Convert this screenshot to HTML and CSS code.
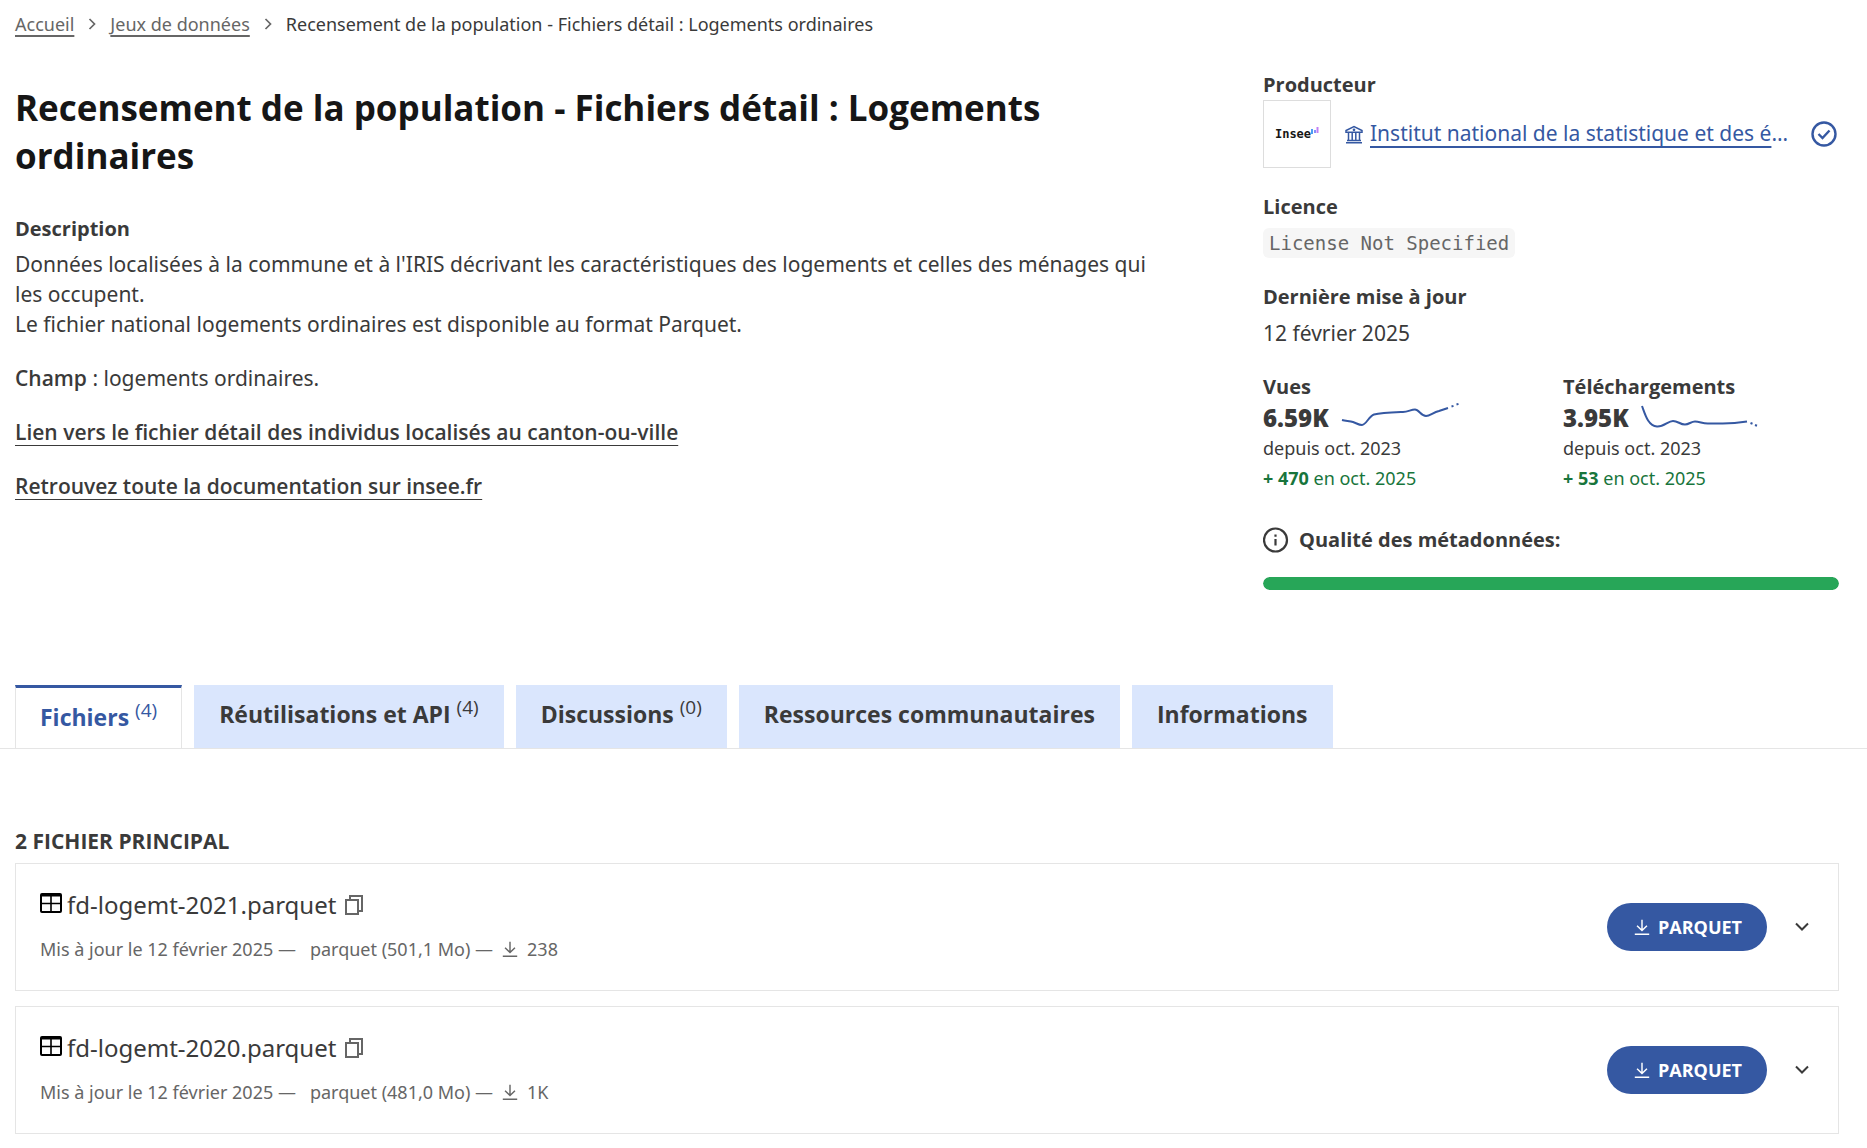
FILE: index.html
```html
<!DOCTYPE html>
<html lang="fr">
<head>
<meta charset="utf-8">
<meta name="viewport" content="width=device-width, initial-scale=1">
<title>Recensement de la population - Fichiers détail : Logements ordinaires</title>
<link rel="stylesheet" href="styles.css">
</head>
<body>
<svg class="sprite" aria-hidden="true">
  <symbol id="i-right" viewBox="0 0 20 20"><path d="M7.500 5l5 5-5 5" fill="none" stroke="currentColor" stroke-width="1.700"/></symbol>
  <symbol id="i-down" viewBox="0 0 20 20"><path d="M4 6.500l6 6 6-6" fill="none" stroke="currentColor" stroke-width="2"/></symbol>
  <symbol id="i-download" viewBox="0 0 20 20"><path d="M10 2v12M4.500 8.500L10 14l5.500-5.500M2 18h16" fill="none" stroke="currentColor" stroke-width="1.600"/></symbol>
  <symbol id="i-copy" viewBox="0 0 20 22"><path d="M6 6V2h12v15h-4M2 6h12v14H2z" fill="none" stroke="currentColor" stroke-width="2"/></symbol>
  <symbol id="i-table" viewBox="0 0 22 20"><rect x="1" y="1" width="20" height="18" rx="1" fill="none" stroke="currentColor" stroke-width="2"/><path d="M1 2.500h20" stroke="currentColor" stroke-width="2"/><path d="M11 2v17M1 10.500h20" fill="none" stroke="currentColor" stroke-width="1.600"/></symbol>
</svg>

<nav class="breadcrumb" aria-label="Fil d'Ariane">
  <ol>
    <li><a href="#accueil">Accueil</a></li>
    <li><svg class="sep"><use href="#i-right"/></svg><a href="#jeux">Jeux de données</a></li>
    <li><svg class="sep"><use href="#i-right"/></svg><span class="current">Recensement de la population - Fichiers détail : Logements ordinaires</span></li>
  </ol>
</nav>

<main>
  <div class="overview">
    <section class="intro">
      <h1>Recensement de la population - Fichiers détail : Logements ordinaires</h1>
      <h2 class="label">Description</h2>
      <div class="prose">
        <p>Données localisées à la commune et à l'IRIS décrivant les caractéristiques des logements et celles des ménages qui les occupent.<br>Le fichier national logements ordinaires est disponible au format Parquet.</p>
        <p><strong>Champ</strong> : logements ordinaires.</p>
        <p><a href="#individus">Lien vers le fichier détail des individus localisés au canton-ou-ville</a></p>
        <p><a href="#documentation">Retrouvez toute la documentation sur insee.fr</a></p>
      </div>
    </section>

    <aside class="facts">
      <section>
        <h2 class="label">Producteur</h2>
        <div class="producer">
          <div class="logo"><span>Insee</span><svg viewBox="0 0 8 8" width="8" height="8"><path d="M1 2v5" stroke="#4a9cf5" stroke-width="2"/><path d="M4 3v3" stroke="#5a6df5" stroke-width="1.500"/><path d="M6.500 0v6" stroke="#c080f5" stroke-width="2"/></svg></div>
          <svg class="bank" viewBox="0 0 18 18" fill="none" stroke="currentColor" stroke-width="1.500"><path d="M1 17.200h16M2 15h14M3.500 7v8M7.200 7v8M10.800 7v8M14.500 7v8M1 6.800V5l8-4 8 4v1.800z"/><circle cx="9" cy="4.300" r=".6"/></svg>
          <div class="name"><a href="#insee">Institut national de la statistique et des études économiques</a></div>
          <svg class="round" viewBox="0 0 26 26" fill="none" stroke="currentColor" stroke-width="2.400"><circle cx="13" cy="13" r="11.500"/><path d="M7.500 13l4 4 7-7.500"/></svg>
        </div>
      </section>
      <section>
        <h2 class="label">Licence</h2>
        <p class="value"><code>License Not Specified</code></p>
      </section>
      <section>
        <h2 class="label">Dernière mise à jour</h2>
        <p class="value">12 février 2025</p>
      </section>
      <div class="stats">
        <section>
          <h2 class="label">Vues</h2>
          <div class="figure"><strong>6.59K</strong>
            <svg class="spark" viewBox="0 -1 118 28"><path d="M1 17C5 18 9 18 12 19C15 20 18 22 21 22C25 22 28 13 33 11.500C40 10 52 9.500 62 9C67 9 70 6.500 74 6.500C78 6.500 80 13 85 13C89 13 92 9.500 98 8L107 5"/><path d="M110.500 3.500l2-.6M115.500 1.500l2-.6"/></svg>
          </div>
          <p>depuis oct. 2023</p>
          <p class="gain"><strong>+ 470</strong> en oct. 2025</p>
        </section>
        <section>
          <h2 class="label">Téléchargements</h2>
          <div class="figure"><strong>3.95K</strong>
            <svg class="spark" viewBox="0 -1 118 28"><path d="M1 3C4 11 7 23 16 23.500C23 24 27 18 32 18C37 18 39 21.500 44 21.500C48 21.500 50 18.500 54 18.500C59 18.500 62 21 68 20.500C80 20 85 22 106 18.500"/><path d="M109.500 20l2 .8M114 22l2 .8"/></svg>
          </div>
          <p>depuis oct. 2023</p>
          <p class="gain"><strong>+ 53</strong> en oct. 2025</p>
        </section>
      </div>
      <section class="quality">
        <h2 class="label"><svg class="round" viewBox="0 0 26 26" fill="none" stroke="currentColor" stroke-width="2.200"><circle cx="12.500" cy="13" r="11.500"/><path d="M12.500 12v6.500M12.500 7.500v2.200"/></svg>Qualité des métadonnées:</h2>
        <div class="meter" role="meter" aria-label="Qualité des métadonnées" aria-valuemin="0" aria-valuemax="100" aria-valuenow="100"><div style="width: 100%"></div></div>
      </section>
    </aside>
  </div>

  <div class="tabs" role="tablist">
    <button type="button" role="tab" aria-selected="true">Fichiers <sup>(4)</sup></button>
    <button type="button" role="tab" aria-selected="false">Réutilisations et API <sup>(4)</sup></button>
    <button type="button" role="tab" aria-selected="false">Discussions <sup>(0)</sup></button>
    <button type="button" role="tab" aria-selected="false">Ressources communautaires</button>
    <button type="button" role="tab" aria-selected="false">Informations</button>
  </div>

  <section class="files">
    <h2>2 FICHIER PRINCIPAL</h2>
    <article class="file">
      <div>
        <h3><svg class="table-icon"><use href="#i-table"/></svg>fd-logemt-2021.parquet<button class="copy" type="button" aria-label="Copier le lien"><svg><use href="#i-copy"/></svg></button></h3>
        <p class="meta"><span>Mis à jour le 12 février 2025 —</span><span>parquet (501,1 Mo) —</span><svg><use href="#i-download"/></svg>238</p>
      </div>
      <div class="actions">
        <button class="download" type="button"><svg><use href="#i-download"/></svg>PARQUET</button>
        <button class="toggle" type="button" aria-label="Ouvrir les détails"><svg><use href="#i-down"/></svg></button>
      </div>
    </article>
    <article class="file">
      <div>
        <h3><svg class="table-icon"><use href="#i-table"/></svg>fd-logemt-2020.parquet<button class="copy" type="button" aria-label="Copier le lien"><svg><use href="#i-copy"/></svg></button></h3>
        <p class="meta"><span>Mis à jour le 12 février 2025 —</span><span>parquet (481,0 Mo) —</span><svg><use href="#i-download"/></svg>1K</p>
      </div>
      <div class="actions">
        <button class="download" type="button"><svg><use href="#i-download"/></svg>PARQUET</button>
        <button class="toggle" type="button" aria-label="Ouvrir les détails"><svg><use href="#i-down"/></svg></button>
      </div>
    </article>
  </section>
</main>
</body>
</html>
```
FILE: styles.css
```css
* { box-sizing: border-box; }

body {
  margin: 0;
  background: #fff;
  color: #3a3a3a;
  font: 21px/30px "Noto Sans", "Open Sans", sans-serif;
}

h1, h2, h3, p, ol { margin: 0; padding: 0; }
button { margin: 0; padding: 0; border: 0; background: none; color: inherit; font: inherit; cursor: pointer; }
svg { flex: none; }
.sprite { display: none; }
h1, h2, strong, .prose a, .tabs button, .download { font-family: "Open Sans", "Noto Sans", sans-serif; font-weight: 700; }

.breadcrumb { padding: 9px 15px 0; font-size: 18px; }
.breadcrumb ol { display: flex; flex-wrap: wrap; list-style: none; }
.breadcrumb li { display: flex; align-items: center; }
.breadcrumb a { color: #666; text-decoration: underline 2px; text-underline-offset: 4px; }
.sep { width: 20px; height: 20px; margin: 0 8px; color: #666; }

.overview {
  display: grid;
  grid-template-columns: minmax(0, 2fr) minmax(0, 1fr);
  column-gap: 96px;
  padding: 31px 28px 95px 15px;
}

.label { font-size: 20px; line-height: 30px; }

h1 { margin: 14px 0 34px; color: #161616; font-size: 35px; line-height: 48px; }
.prose { display: grid; gap: 24px; padding-top: 5px; }
.prose a, .prose strong { font-weight: 600; line-height: 20px; }
.prose a { color: inherit; text-decoration: underline 1px; text-underline-offset: 5px; }

.facts { display: grid; grid-template-columns: minmax(0, 1fr); align-content: start; gap: 24px; }
.producer { display: flex; align-items: center; color: #3558a2; }
.logo {
  display: flex;
  flex: none;
  align-items: center;
  justify-content: center;
  width: 68px;
  height: 68px;
  border: 1px solid #ddd;
  color: #161616;
  font: 700 12px/14px "DejaVu Sans Mono", monospace;
}
.logo svg { align-self: center; margin-bottom: 6px; }
.bank { width: 18px; height: 19px; margin: 0 7px 0 14px; }
.name { flex: 1; min-width: 0; padding-bottom: 2px; overflow: hidden; text-overflow: ellipsis; white-space: nowrap; }
.name a { color: inherit; text-decoration: underline 2px; text-underline-offset: 5px; }
.round { width: 26px; height: 26px; }
.producer .round { margin: 0 2px 0 16px; }
.value { padding-top: 6px; }
code {
  display: inline-block;
  padding: 0 6px;
  border-radius: 6px;
  background: #f6f6f6;
  color: #666;
  font: 19px/30px "DejaVu Sans Mono", monospace;
  vertical-align: top;
}
.stats { display: grid; grid-template-columns: 300px 1fr; font-size: 18px; }
.figure { display: flex; gap: 12px; height: 31px; font-size: 24px; line-height: 31px; }
.figure strong { font-weight: 800; }
.spark { width: 118px; height: 28px; fill: none; stroke: #3558a2; stroke-width: 2; }
.gain { color: #18753c; }
.quality { display: grid; gap: 22px; padding-top: 8px; }
.quality .label { display: flex; align-items: center; gap: 10px; }
.meter { height: 13px; border-radius: 7px; background: #e5e5e5; overflow: hidden; }
.meter div { height: 100%; background: #27a658; border-radius: 7px; }

.tabs { display: flex; gap: 12px; padding-left: 15px; border-bottom: 1px solid #e5e5e5; }
.tabs button {
  height: 63px;
  padding: 0 25px 6px;
  background: #dae6fd;
  font-size: 23px;
  line-height: 30px;
}
.tabs button[aria-selected="true"] {
  padding: 0 24px 3px;
  border: 1px solid #e5e5e5;
  border-top: 3px solid #3558a2;
  border-bottom: 0;
  background: #fff;
  color: #3558a2;
}
.tabs sup { font-size: 19px; line-height: 0; font-weight: 400; }

.files { display: grid; gap: 15px; padding: 77px 28px 14px 15px; }
.files h2 { margin-bottom: -8px; font-size: 21px; line-height: 30px; }
.file {
  display: flex;
  align-items: center;
  justify-content: space-between;
  padding: 23px 24px 25px;
  border: 1px solid #e5e5e5;
}
.file h3 { display: flex; align-items: center; font-size: 24px; line-height: 36px; font-weight: 400; }
.table-icon { width: 22px; height: 20px; margin: 0 5px 4px 0; color: #000; }
.copy { display: flex; margin-left: 8px; color: #666; }
.copy svg { width: 20px; height: 22px; }
.meta { display: flex; align-items: center; margin: 11px 0 1px; color: #666; font-size: 18px; line-height: 30px; }
.meta span + span { margin-left: 14px; }
.meta svg { width: 18px; height: 18px; margin: 0 8px; }
.actions { display: flex; align-items: center; gap: 22px; padding-top: 1px; }
.download {
  display: flex;
  align-items: center;
  gap: 6px;
  height: 48px;
  padding: 0 25px;
  border-radius: 24px;
  background: #3558a2;
  color: #fff;
  font-size: 18px;
}
.download svg { width: 20px; height: 18px; }
.toggle { display: flex; padding: 0 2px 0 3px; }
.toggle svg { width: 20px; height: 20px; }
```
